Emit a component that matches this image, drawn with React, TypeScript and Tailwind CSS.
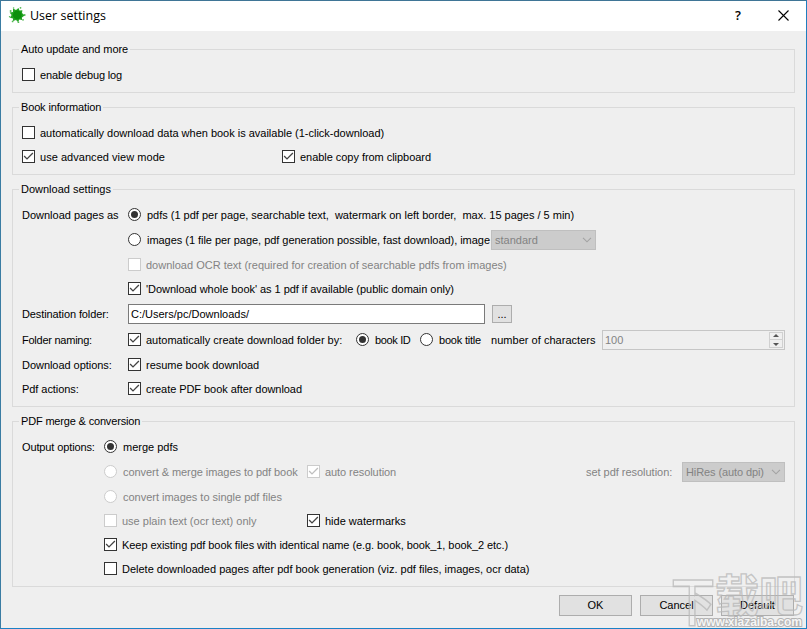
import type { ReactNode } from "react";
import { clsx } from "clsx";

function Check({ on = false, disabled = false }: { on?: boolean; disabled?: boolean }) {
  return (
    <span
      className={clsx(
        "mt-[5px] block h-[13px] w-[13px] shrink-0 border bg-white",
        disabled ? "border-[#cccccc] text-[#bfbfbf]" : "border-[#333333] text-[#444444]",
      )}
    >
      {on && (
        <svg viewBox="0 0 11 11" className="block h-[11px] w-[11px]" fill="none" stroke="currentColor" strokeWidth="1.3">
          <path d="M1.1 5 L4 7.9 L9.9 2" />
        </svg>
      )}
    </span>
  );
}

function Radio({ on = false, disabled = false }: { on?: boolean; disabled?: boolean }) {
  return (
    <span
      className={clsx(
        "mt-[5px] flex h-[13px] w-[13px] shrink-0 items-center justify-center rounded-full border bg-white",
        disabled ? "border-[#cccccc]" : "border-[#333333]",
      )}
    >
      {on && <span className="h-[7px] w-[7px] rounded-full bg-[#333333]" />}
    </span>
  );
}

function Group({
  title,
  className,
  legendClassName,
  children,
}: {
  title: string;
  className: string;
  legendClassName?: string;
  children: ReactNode;
}) {
  return (
    <fieldset className={clsx("border border-[#dadada] pl-[6px]", className)}>
      <legend className={clsx("h-[17px] px-[2px] leading-[17px]", legendClassName)}>{title}</legend>
      <div className="pl-[3px] pt-[5px]">{children}</div>
    </fieldset>
  );
}

function Row({ className, children }: { className?: string; children: ReactNode }) {
  return <div className={clsx("flex h-6 items-start whitespace-pre leading-6", className)}>{children}</div>;
}

function Combo({ value, className }: { value: string; className: string }) {
  return (
    <span
      className={clsx(
        "mt-[2px] flex h-5 shrink-0 items-center justify-between border border-[#bfbfbf] bg-[#cccccc] pl-[3px] pr-[3px] leading-5 text-[#838383]",
        className,
      )}
    >
      <span>{value}</span>
      <svg viewBox="0 0 10 6" className="h-[6px] w-[10px]" fill="none" stroke="#a3a3a3" strokeWidth="1.1">
        <path d="M1 0.8 L5 4.8 L9 0.8" />
      </svg>
    </span>
  );
}

function Button({ label }: { label: string }) {
  return (
    <button className="h-[21px] w-[73px] border border-[#adadad] bg-[#e1e1e1] text-center leading-[19px]">{label}</button>
  );
}

export default function App() {
  return (
    <div className="relative h-[629px] w-[807px] overflow-hidden border border-t-[#3f7596] border-r-[#1f7fc0] border-b-[#1b82c6] border-l-[#3a7ca3] bg-[#efefef] font-['Liberation_Sans',Arial,sans-serif] text-[11px] text-black">
      <header className="flex h-[30px] items-center bg-white">
        <svg viewBox="0 0 18 18" className="-mt-[2px] ml-[7px] h-[18px] w-[18px]">
          <path
            d="M5 2.6 L8 4 L10.5 2 L11.5 4.6 L14.4 4.2 L14 7 L16.6 9.4 L14 11.4 L14 14 L11.4 13.6 L10 16 L8 14 L5 15 L5 12.4 L2 11.8 L3.6 9 L1.6 6.5 L5 6 Z"
            fill="#22a522"
          />
          <circle cx="9.3" cy="9" r="4.4" fill="#0c900c" />
          <g fill="#55b855">
            <circle cx="2.6" cy="5" r="1" />
            <circle cx="5.6" cy="2" r="0.8" />
            <circle cx="12.5" cy="1.8" r="0.9" />
            <circle cx="16.6" cy="9" r="1" />
            <circle cx="15" cy="13.8" r="0.9" />
            <circle cx="10.4" cy="16.2" r="0.9" />
            <circle cx="4.6" cy="15.4" r="0.9" />
            <circle cx="1.6" cy="10.8" r="0.8" />
          </g>
        </svg>
        <h1 className="ml-[4px] font-['Open_Sans',sans-serif] text-[12.5px]">User settings</h1>
        <span className="ml-auto font-['Open_Sans',sans-serif] text-[13px] font-semibold">?</span>
        <svg viewBox="0 0 11 11" className="-mt-[2px] ml-[37px] mr-[17px] h-[11px] w-[11px]" fill="none" stroke="black" strokeWidth="1.1">
          <path d="M0.5 0.5 L10.5 10.5 M10.5 0.5 L0.5 10.5" />
        </svg>
      </header>

      <main className="flex flex-col gap-[6px] pl-[11px] pr-[11px] pt-[10px]">
        <Group title="Auto update and more" className="h-[52px]" legendClassName="tracking-[-0.09px]">
          <Row>
            <Check />
            <span className="ml-[5px] tracking-[-0.15px]">enable debug log</span>
          </Row>
        </Group>

        <Group title="Book information" className="h-[76px]" legendClassName="tracking-[-0.15px]">
          <Row>
            <Check />
            <span className="ml-[5px] tracking-[-0.01px]">
              automatically download data when book is available (1-click-download)
            </span>
          </Row>
          <Row>
            <Check on />
            <span className="ml-[5px] w-[242px] tracking-[0.04px]">use advanced view mode</span>
            <Check on />
            <span className="ml-[5px] tracking-[-0.04px]">enable copy from clipboard</span>
          </Row>
        </Group>

        <Group title="Download settings" className="h-[226px]">
          <Row>
            <span className="w-[106px]">Download pages as</span>
            <Radio on />
            <span className="ml-[6px] tracking-[-0.01px]">
              {"pdfs (1 pdf per page, searchable text,  watermark on left border,  max. 15 pages / 5 min)"}
            </span>
          </Row>
          <Row className="mt-px pl-[106px]">
            <Radio />
            <span className="ml-[6px] w-[344px] tracking-[-0.035px]">
              images (1 file per page, pdf generation possible, fast download), image
            </span>
            <Combo value="standard" className="w-[105px]" />
          </Row>
          <Row className="mt-px pl-[106px]">
            <Check disabled />
            <span className="ml-[5px] text-[#838383]">download OCR text (required for creation of searchable pdfs from images)</span>
          </Row>
          <Row className="pl-[106px]">
            <Check on />
            <span className="ml-[5px] tracking-[-0.04px]">'Download whole book' as 1 pdf if available (public domain only)</span>
          </Row>
          <Row className="mt-px">
            <span className="w-[106px] tracking-[-0.1px]">Destination folder:</span>
            <span className="mt-[2px] h-5 w-[357px] border border-[#7a7a7a] bg-white pl-[2px] leading-[18px]">C:/Users/pc/Downloads/</span>
            <span className="ml-[7px] mt-[3px] h-[18px] w-5 border border-[#adadad] bg-[#e1e1e1] text-center leading-[17px]">...</span>
          </Row>
          <Row className="mt-[2px]">
            <span className="w-[106px] tracking-[-0.25px]">Folder naming:</span>
            <Check on />
            <span className="ml-[5px] w-[210px]">automatically create download folder by:</span>
            <Radio on />
            <span className="ml-[6px] w-[45px] tracking-[-0.35px]">book ID</span>
            <Radio />
            <span className="ml-[6px] w-[52px] tracking-[-0.2px]">book title</span>
            <span className="w-[111px] tracking-[0.03px]">number of characters</span>
            <span className="mt-[2px] flex h-5 w-[183px] items-center justify-between border border-[#c6c6c6] pl-[2px] pr-px leading-[18px] text-[#838383]">
              <span>100</span>
              <span className="flex h-4 w-[14px] flex-col items-center justify-around border border-[#d0d0d0]">
                <svg viewBox="0 0 6 3" className="h-[3px] w-[6px]" fill="#555555">
                  <path d="M0 3 L3 0 L6 3 Z" />
                </svg>
                <span className="h-px w-3 bg-[#d0d0d0]" />
                <svg viewBox="0 0 6 3" className="h-[3px] w-[6px]" fill="#555555">
                  <path d="M0 0 L3 3 L6 0 Z" />
                </svg>
              </span>
            </span>
          </Row>
          <Row className="mt-px">
            <span className="w-[106px] tracking-[-0.04px]">Download options:</span>
            <Check on />
            <span className="ml-[5px] tracking-[-0.03px]">resume book download</span>
          </Row>
          <Row>
            <span className="w-[106px] tracking-[-0.06px]">Pdf actions:</span>
            <Check on />
            <span className="ml-[5px] tracking-[-0.06px]">create PDF book after download</span>
          </Row>
        </Group>

        <Group title="PDF merge &amp; conversion" className="h-[174px]" legendClassName="tracking-[-0.17px]">
          <Row>
            <span className="w-[82px] tracking-[-0.12px]">Output options:</span>
            <Radio on />
            <span className="ml-[6px]">merge pdfs</span>
          </Row>
          <Row className="mt-px pl-[82px] text-[#838383]">
            <Radio disabled />
            <span className="ml-[6px] w-[184px] tracking-[-0.06px]">convert &amp; merge images to pdf book</span>
            <Check on disabled />
            <span className="ml-[5px] w-[261px] tracking-[-0.07px]">auto resolution</span>
            <span className="w-[96px] tracking-[-0.03px]">set pdf resolution:</span>
            <Combo value="HiRes (auto dpi)" className="w-[103px] tracking-[-0.1px]" />
          </Row>
          <Row className="mt-px pl-[82px] text-[#838383]">
            <Radio disabled />
            <span className="ml-[6px] tracking-[-0.02px]">convert images to single pdf files</span>
          </Row>
          <Row className="pl-[82px]">
            <Check disabled />
            <span className="ml-[5px] w-[185px] text-[#838383]">use plain text (ocr text) only</span>
            <Check on />
            <span className="ml-[5px]">hide watermarks</span>
          </Row>
          <Row className="pl-[82px]">
            <Check on />
            <span className="ml-[5px] tracking-[-0.065px]">
              Keep existing pdf book files with identical name (e.g. book, book_1, book_2 etc.)
            </span>
          </Row>
          <Row className="pl-[82px]">
            <Check />
            <span className="ml-[5px] tracking-[-0.005px]">
              Delete downloaded pages after pdf book generation (viz. pdf files, images, ocr data)
            </span>
          </Row>
        </Group>
      </main>

      <footer className="mt-2 flex justify-end gap-2 pr-3">
        <Button label="OK" />
        <Button label="Cancel" />
        <Button label="Default" />
      </footer>

      <div className="pointer-events-none absolute left-[670px] top-[567px] whitespace-nowrap">
        <div className="flex font-['Noto_Sans_CJK_SC',sans-serif] text-[44px] font-bold leading-[50px] text-[#ffffff10] [-webkit-text-stroke:1.3px_#b9b9b9cc]">
          <span className="origin-top scale-y-[1.2]">下</span>
          <span>载</span>
          <span>吧</span>
        </div>
        <div className="absolute left-[26px] top-[47px] text-[12px] font-bold leading-[14px] text-[#f6f6f6] tracking-[-0.05px] [-webkit-text-stroke:2px_#b4b4b4] [paint-order:stroke_fill]">
          www.xiazaiba.com
        </div>
      </div>
    </div>
  );
}
